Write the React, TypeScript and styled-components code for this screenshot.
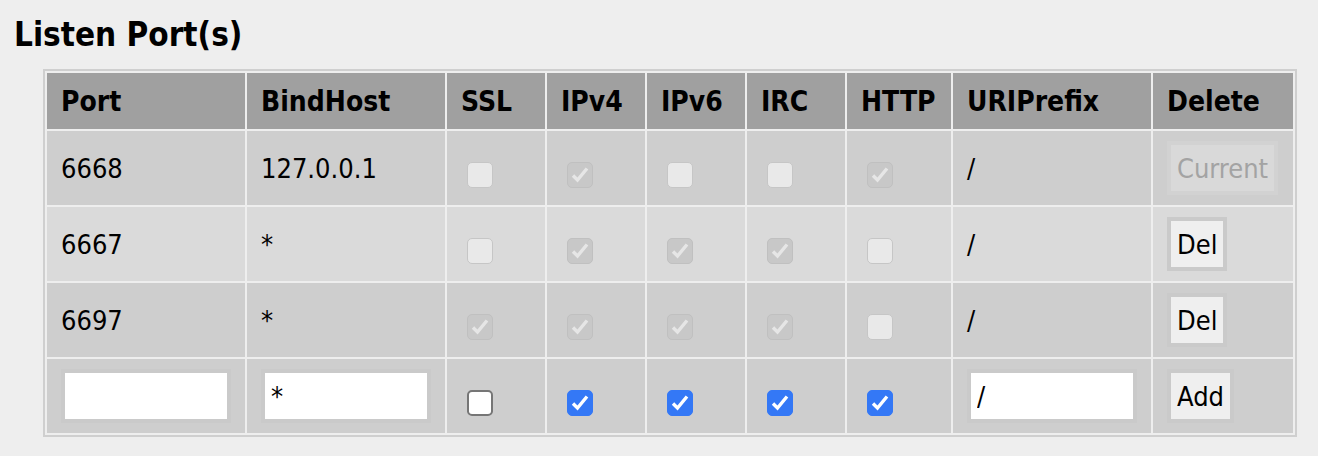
import React from "react";
import styled, { createGlobalStyle } from "styled-components";

const GlobalStyle = createGlobalStyle`
  html, body {
    margin: 0;
    padding: 0;
    background: #eeeeee;
  }
  body {
    font-family: "DejaVu Sans Condensed", "DejaVu Sans", sans-serif;
    font-stretch: condensed;
    color: #000;
  }
`;

const Page = styled.section`
  padding: 15px 21px 20px 14px;
`;

const Title = styled.h2`
  margin: 0 0 14px;
  font-size: 33px;
  line-height: 40px;
  font-weight: bold;
`;

const Table = styled.table`
  margin-left: 29px;
  width: 1254px;
  box-sizing: border-box;
  table-layout: fixed;
  border-collapse: separate;
  border-spacing: 2px;
  border: 2px solid #cfcfcf;
`;

const HeadRow = styled.tr`
  height: 56px;
  background: #a0a0a0;
`;

const BodyRow = styled.tr<{ $light?: boolean }>`
  height: 74px;
  background: ${(p) => (p.$light ? "#dadada" : "#cecece")};
`;

const HeadCell = styled.th`
  padding: 0 14px;
  text-align: left;
  vertical-align: middle;
  font-size: 28px;
  font-weight: bold;
  white-space: nowrap;
`;

const Cell = styled.td`
  padding: 0 14px;
  vertical-align: middle;
  font-size: 27px;
  white-space: nowrap;
`;

const Box = styled.span<{ $checked: boolean; $disabled: boolean }>`
  display: block;
  box-sizing: border-box;
  width: 26px;
  height: 26px;
  margin: 14px 0 0 6px;
  border-radius: 5px;
  background: ${(p) =>
    p.$disabled ? (p.$checked ? "#c8c8c8" : "#e9e9e9") : p.$checked ? "#3478f6" : "#ffffff"};
  border: ${(p) =>
    p.$disabled
      ? p.$checked
        ? "1.5px solid #c0c0c0"
        : "1.5px solid #c6c6c6"
      : p.$checked
      ? "1.5px solid #3478f6"
      : "2px solid #767676"};
  svg {
    display: block;
    width: 100%;
    height: 100%;
  }
`;

const TextInput = styled.input`
  display: block;
  box-sizing: content-box;
  width: 150px;
  height: 46px;
  padding: 0 6px;
  margin: 0;
  border: 4px solid #cacaca;
  border-radius: 0;
  background: #ffffff;
  font-family: inherit;
  font-stretch: condensed;
  font-size: 27px;
  color: #000;
  outline: none;
`;

const Button = styled.button`
  display: block;
  box-sizing: content-box;
  height: 46px;
  padding: 0 6px;
  margin: 0;
  border: 4px solid #cacaca;
  border-radius: 0;
  background: #efefef;
  font-family: inherit;
  font-stretch: condensed;
  font-size: 27px;
  color: #000;
  cursor: pointer;
  &:disabled {
    background: #d9d9d9;
    border-color: #d2d2d2;
    color: #a3a3a3;
    cursor: default;
  }
`;

function Check({ checked, disabled }: { checked: boolean; disabled?: boolean }) {
  return (
    <Box $checked={checked} $disabled={!!disabled} role="checkbox" aria-checked={checked}>
      {checked && (
        <svg viewBox="0 0 24 24">
          <polyline
            points="5,12.5 9.5,17 19,5.5"
            fill="none"
            stroke={disabled ? "#e6e6e6" : "#ffffff"}
            strokeWidth="3.4"
            strokeLinecap="butt"
            strokeLinejoin="miter"
          />
        </svg>
      )}
    </Box>
  );
}

type Listener = {
  port: string;
  host: string;
  ssl: boolean;
  v4: boolean;
  v6: boolean;
  irc: boolean;
  http: boolean;
  uri: string;
  current?: boolean;
};

const listeners: Listener[] = [
  { port: "6668", host: "127.0.0.1", ssl: false, v4: true, v6: false, irc: false, http: true, uri: "/", current: true },
  { port: "6667", host: "*", ssl: false, v4: true, v6: true, irc: true, http: false, uri: "/" },
  { port: "6697", host: "*", ssl: true, v4: true, v6: true, irc: true, http: false, uri: "/" },
];

const columns = [
  { label: "Port", width: 198 },
  { label: "BindHost", width: 198 },
  { label: "SSL", width: 98 },
  { label: "IPv4", width: 98 },
  { label: "IPv6", width: 98 },
  { label: "IRC", width: 98 },
  { label: "HTTP", width: 104 },
  { label: "URIPrefix", width: 198 },
  { label: "Delete", width: 140 },
];

export default function App() {
  return (
    <>
      <GlobalStyle />
      <Page>
        <Title>Listen Port(s)</Title>
        <Table>
          <colgroup>
            {columns.map((c) => (
              <col key={c.label} style={{ width: c.width }} />
            ))}
          </colgroup>
          <thead>
            <HeadRow>
              {columns.map((c) => (
                <HeadCell key={c.label}>{c.label}</HeadCell>
              ))}
            </HeadRow>
          </thead>
          <tbody>
            {listeners.map((l, i) => (
              <BodyRow key={l.port} $light={i === 1}>
                <Cell>{l.port}</Cell>
                <Cell>{l.host}</Cell>
                <Cell><Check checked={l.ssl} disabled /></Cell>
                <Cell><Check checked={l.v4} disabled /></Cell>
                <Cell><Check checked={l.v6} disabled /></Cell>
                <Cell><Check checked={l.irc} disabled /></Cell>
                <Cell><Check checked={l.http} disabled /></Cell>
                <Cell>{l.uri}</Cell>
                <Cell>
                  {l.current ? <Button disabled>Current</Button> : <Button>Del</Button>}
                </Cell>
              </BodyRow>
            ))}
            <BodyRow>
              <Cell><TextInput type="text" defaultValue="" /></Cell>
              <Cell><TextInput type="text" defaultValue="*" /></Cell>
              <Cell><Check checked={false} /></Cell>
              <Cell><Check checked /></Cell>
              <Cell><Check checked /></Cell>
              <Cell><Check checked /></Cell>
              <Cell><Check checked /></Cell>
              <Cell><TextInput type="text" defaultValue="/" /></Cell>
              <Cell><Button>Add</Button></Cell>
            </BodyRow>
          </tbody>
        </Table>
      </Page>
    </>
  );
}
